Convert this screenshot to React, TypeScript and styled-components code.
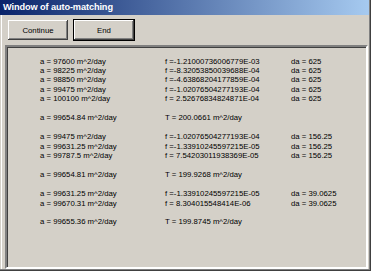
import styled, { createGlobalStyle } from "styled-components";

const GlobalStyle = createGlobalStyle`
  html, body {
    margin: 0;
    padding: 0;
    background: #d4d0c8;
  }
`;

type Row = [string, string, string?];

const blocks: Row[][] = [
  [
    ["a = 97600 m^2/day", "f =-1.21000736006779E-03", "da = 625"],
    ["a = 98225 m^2/day", "f =-8.32053850039688E-04", "da = 625"],
    ["a = 98850 m^2/day", "f =-4.63868204177859E-04", "da = 625"],
    ["a = 99475 m^2/day", "f =-1.02076504277193E-04", "da = 625"],
    ["a = 100100 m^2/day", "f = 2.52676834824871E-04", "da = 625"],
  ],
  [["a = 99654.84 m^2/day", "T = 200.0661 m^2/day"]],
  [
    ["a = 99475 m^2/day", "f =-1.02076504277193E-04", "da = 156.25"],
    ["a = 99631.25 m^2/day", "f =-1.33910245597215E-05", "da = 156.25"],
    ["a = 99787.5 m^2/day", "f = 7.54203011938369E-05", "da = 156.25"],
  ],
  [["a = 99654.81 m^2/day", "T = 199.9268 m^2/day"]],
  [
    ["a = 99631.25 m^2/day", "f =-1.33910245597215E-05", "da = 39.0625"],
    ["a = 99670.31 m^2/day", "f = 8.304015548414E-06", "da = 39.0625"],
  ],
  [["a = 99655.36 m^2/day", "T = 199.8745 m^2/day"]],
];

export default function App() {
  return (
    <>
      <GlobalStyle />
      <Window>
        <TitleBar>Window of auto-matching</TitleBar>
        <Toolbar>
          <Button>Continue</Button>
          <Button $default>End</Button>
        </Toolbar>
        <Panel>
          {blocks.map((block, i) => (
            <Block key={i}>
              {block.map((row, j) => (
                <Line key={j}>
                  <Cell>{row[0]}</Cell>
                  <Cell>{row[1]}</Cell>
                  <Cell>{row[2] ?? ""}</Cell>
                </Line>
              ))}
            </Block>
          ))}
        </Panel>
      </Window>
    </>
  );
}

const Window = styled.div`
  width: 371px;
  height: 271px;
  box-sizing: border-box;
  display: flex;
  flex-direction: column;
  background: #d4d0c8;
  box-shadow: inset -1px -1px #404040, inset -2px -2px #808080,
    inset 1px 0 #d4d0c8, inset 2px 0 #ffffff;
  font-family: "Liberation Sans", Arial, sans-serif;
  color: #000;
`;

const TitleBar = styled.div`
  height: 15px;
  margin-right: 2px;
  padding-left: 3px;
  background: linear-gradient(to right, #0a246a, #a6caf0);
  color: #fff;
  font-weight: bold;
  font-size: 9.2px;
  line-height: 15px;
  letter-spacing: -0.1px;
`;

const Toolbar = styled.div`
  display: flex;
  gap: 5px;
  padding: 4px 0 0 8px;
  height: 21px;
`;

const Button = styled.button<{ $default?: boolean }>`
  width: ${(p) => (p.$default ? "62px" : "60px")};
  height: ${(p) => (p.$default ? "22px" : "20px")};
  margin-top: ${(p) => (p.$default ? "0" : "1px")};
  padding: 0;
  background: #d4d0c8;
  font-family: "Liberation Sans", Arial, sans-serif;
  font-size: 7.8px;
  color: #000;
  border: ${(p) => (p.$default ? "1px solid #000" : "none")};
  box-shadow: inset -1px -1px #404040, inset 1px 1px #ffffff,
    inset -2px -2px #808080, inset 2px 2px #d4d0c8;
`;

const Panel = styled.div`
  margin: 5px 3px 2px 5px;
  flex: 1;
  box-sizing: border-box;
  padding: 9.5px 0 0 33px;
  border-style: solid;
  border-width: 2px;
  border-color: #808080 #ffffff #ffffff #808080;
  box-shadow: inset 1px 1px #404040, inset -1px -1px #d4d0c8;
  font-size: 7.75px;
  line-height: 9.47px;
`;

const Block = styled.div`
  margin-bottom: 9.47px;
`;

const Line = styled.div`
  display: grid;
  grid-template-columns: 125px 126px auto;
  white-space: nowrap;
`;

const Cell = styled.span``;
